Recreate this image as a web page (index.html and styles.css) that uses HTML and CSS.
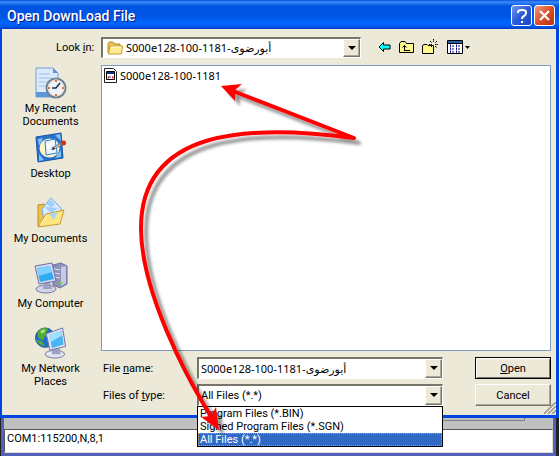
FILE: index.html
```html
<!DOCTYPE html>
<html lang="en">
<head>
  <meta charset="UTF-8">
  <meta name="viewport" content="width=device-width, initial-scale=1">
  <title>Open DownLoad File</title>
  <link rel="stylesheet" href="styles.css">
</head>
<body>
  <main class="dialog">
    <header class="titlebar">
      <h1>Open DownLoad File</h1>
      <button class="cap help" type="button" aria-label="Help">
        <svg width="14" height="16" viewBox="0 0 14 16"><path d="M3 5V4q0-2 4-2t4 2v1q0 2-2 3T7 11M7 13v2" fill="none" stroke="#fff" stroke-width="2"/></svg>
      </button>
      <button class="cap close" type="button" aria-label="Close">
        <svg width="13" height="13" viewBox="0 0 13 13"><path d="M2 2l9 9M11 2l-9 9" stroke="#fff" stroke-width="2.3"/></svg>
      </button>
    </header>

    <div class="lookin">
      <label for="look">Look <u>i</u>n:</label>
      <div class="combo">
        <svg class="folder" width="16" height="14" viewBox="0 0 16 14"><path d="M1 12V3l1-2h4l2 2h5v2" fill="#e8c35a" stroke="#b98d20"/><path d="M3 5h12.500l-1 8H1.500z" fill="#ffe991" stroke="#c99b28"/><path d="M4 6h10" stroke="#fffbd8"/></svg>
        <select id="look" class="field with-icon name"><option>S000e128-100-1181-أبورضوى</option></select>
        <span class="drop"></span>
      </div>
      <nav class="tools">
        <button type="button" aria-label="Back"><svg width="13" height="12" viewBox="0 0 13 12"><path d="M1 6l4.500-4.500V4H12v4H5.500v2.500z" fill="#0ff" stroke="#000"/></svg></button>
        <button type="button" aria-label="Up one level"><svg width="15" height="14" viewBox="0 0 15 14"><path d="M.5 12.500V3.500L2 1.500h4l1.500 2h7v9z" fill="#fff98a" stroke="#000"/><path d="M5.500 10.500V5M3.500 7.500l2-2 2 2M5 10.500h6" fill="none" stroke="#000"/></svg></button>
        <button type="button" aria-label="New folder"><svg width="17" height="16" viewBox="0 0 17 16"><path d="M.5 14.500V6.500l1.500-1h3l1 1h5.500v8z" fill="#fff98a" stroke="#000"/><path d="M11.500 0v3m0 4v3M7 5.500h3m3 0h3M8 2l2 2m3 3l2 2M15 2l-2 2m-3 3l-1 1" stroke="#000" stroke-dasharray="1.500 .6"/></svg></button>
        <button type="button" aria-label="View menu"><svg width="24" height="15" viewBox="0 0 24 15"><path d="M.5.5h15v13H.5z" fill="#fff" stroke="#000"/><path d="M1 2h14" stroke="#2b5ca8" stroke-width="2"/><path d="M1 3.500h14" stroke="#000"/><path d="M3 6h1m1 0h2m2 0h1m1 0h2M3 9h1m1 0h2m2 0h1m1 0h2M3 12h1m1 0h2m2 0h1m1 0h2" stroke="#000080"/><path d="M3 5.500h1m5 0h1M3 8.500h1m5 0h1M3 11.500h1m5 0h1" stroke="#000080" stroke-width="2"/><path d="M18 6h5l-2.500 3z"/></svg></button>
      </nav>
    </div>

    <div class="content">
      <nav class="places">
        <a href="#recent">
          <svg width="32" height="32" viewBox="0 0 32 32">
            <path d="M1 1h17l5 5v24H1z" fill="#d9eafb" stroke="#7d9fce"/><path d="M18 1v5h5z" fill="#5d93df"/><path d="M4 7h11M4 11h13M4 15h9M4 19h8" stroke="#9bbde8"/><path d="M1 25h15v5H1z" fill="#5d96dc"/>
            <circle cx="21" cy="21" r="9.500" fill="#edf3f7" stroke="#737e88" stroke-width="2"/><circle cx="21" cy="21" r="8" fill="none" stroke="#c9d7e0"/><path d="M21 13v2m0 12v2M13 21h2m12 0h2" stroke="#ef7228" stroke-width="2"/><path d="M25 16l-4 5h-4" fill="none" stroke="#17324d" stroke-width="1.500"/>
          </svg>
          <span>My Recent Documents</span>
        </a>
        <a href="#desktop">
          <svg width="32" height="32" viewBox="0 0 32 32">
            <path d="M1 5l25-4 2 25-25 4z" fill="#2872cc" stroke="#1453a4"/><path d="M3 7l5-1-4 8zM20 3l5-1 1 7zM4 22l5 6-5 1zM26 18v7l-6 1z" fill="#82c3f5"/><ellipse cx="14.500" cy="16" rx="10" ry="9.500" fill="#fff4ca"/><path d="M10 9l10-2 2 14-11 2z" fill="#e7f4ff" stroke="#3282d0"/><path d="M12 12l6-1-5 7z" fill="#fff"/>
            <path d="M17 17l11-6" stroke="#76828d" stroke-width="3"/><path d="M17 17l8-4" stroke="#d6e3ef"/><circle cx="28.500" cy="11" r="2.500" fill="#d62f16"/><path d="M16 18l3-3 1 2z" fill="#222"/>
          </svg>
          <span>Desktop</span>
        </a>
        <a href="#documents">
          <svg width="32" height="32" viewBox="0 0 32 32">
            <path d="M3 29V8l6-1 2 4 9 2v14z" fill="#edc34d" stroke="#bc8a22"/><path d="M7 12l9-11 10 10v9L9 24z" fill="#d6edff" stroke="#78a9dd"/><path d="M16 3l4 4-4 4-4-4zM10 10l6 6 7-5" fill="#9cceff"/><path d="M3 30L11 17l18-4-4 14z" fill="#ffe482" stroke="#c99b2d"/><path d="M14 17l9-2-4 8z" fill="#a8d5eb"/><path d="M5 28l7-10" stroke="#fff7c8"/>
          </svg>
          <span>My Documents</span>
        </a>
        <a href="#computer">
          <svg width="34" height="32" viewBox="0 0 34 32">
            <path d="M19 3l8-2 6 3v18l-7 4-7-3z" fill="#8f91b8" stroke="#6f719c"/><path d="M27 5l5-1v17l-5 3z" fill="#c8cae3"/><path d="M20 7l6 1m-6 3l6 1m-6 3l6 1" stroke="#e1e2f0"/><ellipse cx="12" cy="27" rx="10" ry="4" fill="#d3d5e7" stroke="#7779a2"/><path d="M10 20h6l2 7H9z" fill="#9ea1c3"/><path d="M1 4l17-3 4 18-17 3z" fill="#d5d8ee" stroke="#6c72a8"/><path d="M3 6l13-2 4 13-14 3z" fill="#31aaf1"/><path d="M3 6l13-2 2 6-13 4z" fill="#7fd2ff"/><circle cx="27" cy="21" r="1.500" fill="#72d74c"/>
          </svg>
          <span>My Computer</span>
        </a>
        <a href="#network">
          <svg width="34" height="32" viewBox="0 0 34 33">
            <circle cx="11" cy="11" r="10" fill="#216dc5" stroke="#28569b"/><path d="M3 5q6-6 11-3l-2 4 3 2-5 2-1 4-5-3zM2 13l6 2 3 5q-7-1-9-7z" fill="#52ae32"/><path d="M6 4l4-2 1 3-4 2z" fill="#a9e36a"/><ellipse cx="21" cy="28" rx="10" ry="4" fill="#e3e4f1" stroke="#7779a2"/><path d="M18 22h8l1 6h-9z" fill="#9ea1c3"/><path d="M12 7l17-6 3 19-16 4z" fill="#e3e5f4" stroke="#6c72a8"/><path d="M15 8l13-4 2 14-12 4z" fill="#48b6f2"/><path d="M15 8l13-4v5l-12 7z" fill="#9edfff"/>
          </svg>
          <span>My Network Places</span>
        </a>
      </nav>

      <div class="pane">
        <ul class="files">
          <li>
            <svg width="13" height="15" viewBox="0 0 13 15"><path d="M.5.500h9l3 3v11H.5z" fill="#fff" stroke="#222"/><path d="M2.500 3.500h8v8h-8z" fill="#fff" stroke="#000"/><path d="M3 5h7" stroke="#142d95" stroke-width="2"/><path d="M3 9l2-1v3zM10 9L8 8v3z" fill="#d91f1f"/><path d="M6 8v2" stroke="#1837c8"/></svg>
            <a class="name" href="#file">S000e128-100-1181</a>
          </li>
        </ul>
        <form class="form">
          <label for="fname">File <u>n</u>ame:</label>
          <div class="combo">
            <input id="fname" class="field name" type="text" value="S000e128-100-1181-أبورضوى">
            <button class="drop" type="button" aria-label="Recent names"></button>
          </div>
          <button class="btn default" type="button"><u>O</u>pen</button>
          <label for="ftype">Files of <u>t</u>ype:</label>
          <div class="combo">
            <select id="ftype" class="field"><option>All Files (*.*)</option></select>
            <span class="drop"></span>
            <ul class="options">
              <li>Program Files (*.BIN)</li>
              <li>Signed Program Files (*.SGN)</li>
              <li class="selected">All Files (*.*)</li>
            </ul>
          </div>
          <button class="btn" type="button">Cancel</button>
        </form>
      </div>
    </div>
    <svg class="grip" width="12" height="12" viewBox="0 0 12 12"><path d="M0 12L12 0M4 12l8-8M8 12l4-4" stroke="#a8a494" stroke-width="2"/><path d="M2 12L12 2M6 12l6-6" stroke="#fff"/></svg>
  </main>

  <section class="owner">
    <div class="stub"></div>
    <input class="status" type="text" aria-label="Port settings" value="COM1:115200,N,8,1">
  </section>

  <!-- pointer from the file to the type filter -->
  <svg class="arrows" width="559" height="456" viewBox="0 0 559 456">
    <defs>
      <filter id="shadow" x="-10%" y="-10%" width="120%" height="120%"><feDropShadow dx="5" dy="5" stdDeviation="1.500" flood-color="#000" flood-opacity=".4"/></filter>
    </defs>
    <g filter="url(#shadow)" fill="none" stroke="#f00" stroke-width="4" stroke-linecap="round" stroke-linejoin="round">
      <path d="M233 91L354 138C250 124 141 128 141 228C141 290 185 375 212 418"/>
      <path d="M221 86l21-2-7 6v11zM219 430l-18-13 10-1 5-9z" fill="#f00" stroke="none"/>
    </g>
  </svg>
</body>
</html>
```

FILE: styles.css
```css
* { box-sizing: border-box; }
body { margin: 0; min-height: 100vh; display: flex; flex-direction: column; position: relative; overflow: hidden; background: #222; color: #000; font: 11px/13px Roboto, "Liberation Sans", sans-serif; }
button, input, select { font: inherit; color: inherit; margin: 0; }
ul { list-style: none; margin: 0; padding: 0; }
a { color: inherit; text-decoration: none; }
svg { display: block; flex: none; }
.name { font-family: "Noto Sans", "DejaVu Sans", sans-serif; }

.dialog { position: relative; z-index: 1; background: #ece9d8; border: solid #0046e0; border-width: 0 3px 3px 2px; }
.titlebar { display: flex; align-items: center; gap: 2px; height: 29px; margin: 0 -3px 0 -2px; padding: 2px 4px 0 7px; color: #fff; background: linear-gradient(#0a50d8, #3a8cf8 2px, #0054e3 6px, #0055e5 16px, #0066ff 23px, #005bf0 26px, #003dc4); }
.titlebar h1 { flex: 1; margin: 0; font: 500 14px/18px Roboto, sans-serif; text-shadow: 1px 1px #0a1883; }
.cap { display: grid; place-items: center; width: 21px; height: 21px; padding: 0; border: 1px solid #fff; border-radius: 3px; }
.help { background: linear-gradient(135deg, #7296ec, #2a5ad8 50%, #1947c2); }
.close { background: linear-gradient(135deg, #f09a80, #dd4e27 50%, #b83010); }

.lookin { display: flex; align-items: center; height: 36px; padding: 0 5px 0 54px; }
.lookin label { width: 45px; }
.lookin .combo { width: 260px; }
.combo { position: relative; height: 21px; background: #fff; border: solid; border-width: 2px 1px 1px 2px; border-color: #77756a #fff #fff #77756a; }
.field { display: block; width: 100%; height: 18px; padding: 0 20px 0 2px; border: 0; border-radius: 0; outline: 0; background: none; appearance: none; line-height: 18px; }
.with-icon { padding-left: 23px; }
.folder { position: absolute; left: 4px; top: 2px; }
.drop { position: absolute; top: 0; right: 0; width: 17px; height: 18px; padding: 0; background: #ece9d8; border: 1px solid; border-color: #fff #77756a #77756a #fff; box-shadow: inset -1px -1px #aca899; pointer-events: none; }
.drop::after { content: ""; position: absolute; left: 4px; top: 6px; border: solid transparent; border-width: 4px 4px 0; border-top-color: #000; }
.tools { display: flex; align-items: center; gap: 8px; margin-left: 17px; }
.tools button { padding: 0; border: 0; background: none; }

.content { display: grid; grid-template-columns: 99px 1fr; }
.places { display: grid; grid-auto-rows: 65px; align-content: start; padding: 2px 2px 0 0; }
.places a { display: flex; flex-direction: column; align-items: center; gap: 3px; text-align: center; }
.places span { max-width: 80px; }
.pane { padding-right: 5px; }
.files { height: 286px; padding: 2px; background: #fff; border: 1px solid #7f9db9; }
.files li { display: flex; align-items: center; gap: 3px; }
.form { display: grid; grid-template-columns: 94px 246px 1fr; gap: 5px 0; padding: 6px 0 9px 2px; align-items: center; }
.form .combo { height: 22px; }
.form .field, .form .drop { height: 19px; }
.btn { justify-self: end; width: 76px; height: 22px; padding: 0; background: #ece9d8; border: 1px solid; border-color: #fff #77756a #77756a #fff; box-shadow: inset -1px -1px #aca899; }
.default { border-color: #000; box-shadow: inset 1px 1px #fff, inset -1px -1px #77756a; }
.options { position: absolute; left: -2px; right: -1px; top: 20px; z-index: 2; background: #fff; border: 1px solid #000; }
.options li { padding-left: 2px; }
.options .selected { color: #fff; background: #316ac5; outline: 1px dotted #d99a45; outline-offset: -1px; }
.grip { position: absolute; right: 0; bottom: 1px; }

.owner { flex: 1; display: flex; flex-direction: column; margin: 0 3px 0 1px; background: #c0c0c0; border: solid #5560b8; border-width: 0 3px 3px; }
.stub { width: 82px; height: 3px; margin: 0 28px 8px auto; border: solid #808080; border-width: 0 1px 1px 0; }
.status { width: 100%; flex: 1; padding: 0 2px 6px; background: #fff; border: 1px solid; border-color: #555 #ddd #ddd #555; border-radius: 0; outline: 0; }
.arrows { position: absolute; left: 0; top: 0; z-index: 3; pointer-events: none; }
```
